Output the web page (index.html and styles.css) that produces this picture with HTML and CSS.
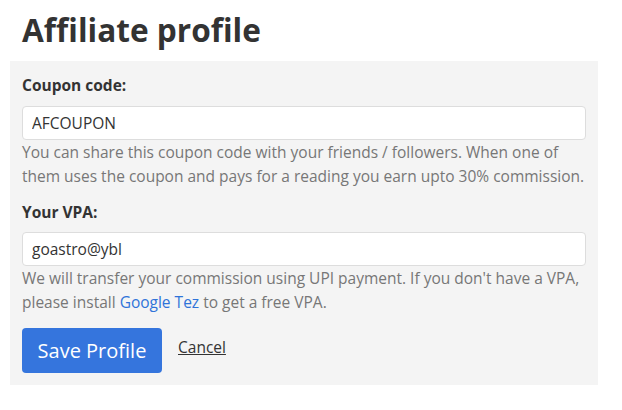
FILE: index.html
```html
<!DOCTYPE html>
<html>
<head>
<meta charset="utf-8">
<link rel="stylesheet" href="styles.css">
</head>
<body>
<div class="page">
  <h1 class="title">Affiliate profile</h1>
  <form class="panel">
    <label class="label" for="coupon">Coupon code:</label>
    <input class="field" id="coupon" type="text" value="AFCOUPON">
    <p class="help">You can share this coupon code with your friends / followers. When one of them uses the coupon and pays for a reading you earn upto 30% commission.</p>
    <label class="label label-second" for="vpa">Your VPA:</label>
    <input class="field" id="vpa" type="text" value="goastro@ybl">
    <p class="help">We will transfer your commission using UPI payment. If you don't have a VPA, please install <a class="link" href="#">Google Tez</a> to get a free VPA.</p>
    <div class="actions">
      <button class="btn" type="button">Save Profile</button>
      <a class="cancel" href="#">Cancel</a>
    </div>
  </form>
</div>
</body>
</html>
```
FILE: styles.css
```css
* { box-sizing: border-box; }
html, body { margin: 0; padding: 0; background: #fff; }
body {
  font-family: "Open Sans", Lato, sans-serif;
  color: #333;
}
.page {
  padding: 10px 0 0 10px;
}
.title {
  margin: 0 0 11px 12px;
  font-size: 31.6px;
  line-height: 40px;
  font-weight: 700;
  color: #333;
}
.panel {
  width: 588px;
  background: #f4f4f4;
  padding: 12px;
  margin: 0;
}
.label {
  display: block;
  font-size: 15.5px;
  font-weight: 700;
  line-height: 24px;
  color: #333;
  margin-bottom: 9px;
}
.label-second {
  margin-top: 12px;
  margin-bottom: 8px;
}
.field {
  display: block;
  width: 564px;
  height: 34px;
  padding: 0 9px;
  border: 1px solid #ddd;
  border-radius: 4px;
  background: #fff;
  font-family: inherit;
  font-size: 15.5px;
  color: #333;
  outline: none;
}
.help {
  margin: 0;
  font-size: 15.5px;
  line-height: 24px;
  color: #777;
}
.link {
  color: #2f73d9;
  text-decoration: none;
}
.actions {
  display: flex;
  align-items: flex-start;
  gap: 16px;
  margin-top: 14px;
}
.btn {
  height: 45px;
  width: 140px;
  padding: 0;
  border: none;
  border-radius: 4px;
  background: #3575dd;
  color: #fff;
  font-family: inherit;
  font-size: 20px;
  cursor: pointer;
}
.cancel {
  margin-top: 7px;
  font-size: 15.5px;
  line-height: 24px;
  color: #333;
  text-decoration: underline;
}
```
